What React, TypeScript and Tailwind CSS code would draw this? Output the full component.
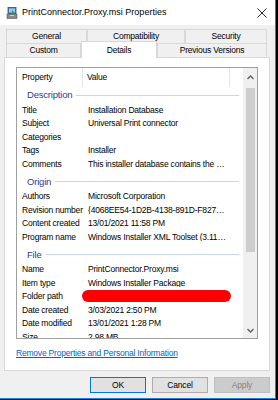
import React from 'react';

type Row = { label: string; value?: string; redacted?: boolean };
type Group = { title: string; rows: Row[] };

const groups: Group[] = [
  {
    title: 'Description',
    rows: [
      { label: 'Title', value: 'Installation Database' },
      { label: 'Subject', value: 'Universal Print connector' },
      { label: 'Categories' },
      { label: 'Tags', value: 'Installer' },
      { label: 'Comments', value: 'This installer database contains the logic and data required to install' },
    ],
  },
  {
    title: 'Origin',
    rows: [
      { label: 'Authors', value: 'Microsoft Corporation' },
      { label: 'Revision number', value: '{4068EE54-1D2B-4138-891D-F827A1B2C3D4}' },
      { label: 'Content created', value: '13/01/2021 11:58 PM' },
      { label: 'Program name', value: 'Windows Installer XML Toolset (3.11.2.4516)' },
    ],
  },
  {
    title: 'File',
    rows: [
      { label: 'Name', value: 'PrintConnector.Proxy.msi' },
      { label: 'Item type', value: 'Windows Installer Package' },
      { label: 'Folder path', redacted: true },
      { label: 'Date created', value: '3/03/2021 2:50 PM' },
      { label: 'Date modified', value: '13/01/2021 1:28 PM' },
      { label: 'Size', value: '2.98 MB' },
    ],
  },
];

function InstallerIcon() {
  return (
    <svg width="12" height="12" viewBox="0 0 12 12">
      <rect x="2" y="0.5" width="8" height="6" fill="#4a7fc1" stroke="#2c4f80" strokeWidth="0.8" />
      <rect x="3" y="1.5" width="6" height="4" fill="#9cc8f0" />
      <rect x="1" y="7" width="10" height="4.5" fill="#8a8a8a" stroke="#555" strokeWidth="0.6" />
      <path d="M6 3 L8.5 6 L6 9 Z" fill="#3a9a3a" />
      <rect x="4" y="8" width="4" height="1" fill="#d0d0d0" />
    </svg>
  );
}

function Tab({ label, w, selected }: { label: string; w: string; selected?: boolean }) {
  if (selected) {
    return (
      <div
        className={`${w} relative z-10 -mt-[2px] -mb-[1px] flex h-[17px] items-center justify-center border border-b-0 border-[#d9d9d9] bg-white`}
      >
        {label}
      </div>
    );
  }
  return (
    <div className={`${w} flex h-[14px] items-center justify-center border border-b-0 border-[#d9d9d9] bg-[#f0f0f0]`}>
      {label}
    </div>
  );
}

function Button({ label, focus, disabled }: { label: string; focus?: boolean; disabled?: boolean }) {
  const cls = disabled
    ? 'border-[#bfbfbf] bg-[#cccccc] text-[#838383]'
    : focus
      ? 'border-[#0078d7] bg-[#e1e1e1] text-black'
      : 'border-[#adadad] bg-[#e1e1e1] text-black';
  return (
    <div className={`flex h-[16px] w-[56px] items-center justify-center border ${cls}`}>{label}</div>
  );
}

export default function App() {
  return (
    <div
      className="h-[400px] w-[278px] overflow-hidden bg-black text-[8.5px] leading-none tracking-[-0.2px] text-black"
      style={{ fontFamily: '"Liberation Sans", Arial, sans-serif' }}
    >
      <div className="flex h-[399px] w-[276px] flex-col border-r border-b border-[#1883d7] bg-[#f0f0f0]">
        {/* title bar */}
        <div className="flex h-[25px] items-center bg-white pl-[6px] pr-[8px]">
          <InstallerIcon />
          <span className="ml-[4px] text-[9px] tracking-normal">PrintConnector.Proxy.msi Properties</span>
          <svg className="ml-auto" width="10" height="10" viewBox="0 0 10 10">
            <path d="M0.5 0.5 L9.5 9.5 M9.5 0.5 L0.5 9.5" stroke="#111" strokeWidth="0.9" />
          </svg>
        </div>

        {/* tabs */}
        <div className="mt-[4px] pl-[6px]">
          <div className="flex">
            <Tab label="General" w="w-[81px]" />
            <Tab label="Compatibility" w="w-[98px]" />
            <Tab label="Security" w="w-[82px]" />
          </div>
          <div className="flex items-end">
            <Tab label="Custom" w="w-[75px]" />
            <Tab label="Details" w="w-[76px]" selected />
            <Tab label="Previous Versions" w="w-[110px]" />
          </div>
        </div>

        {/* panel */}
        <div className="ml-[4px] flex h-[314px] w-[266px] flex-col border border-[#d9d9d9] bg-white pl-[11px] pt-[9px]">
          <div className="flex h-[272px] w-[242px] border border-[#a0a0a0]">
            <div className="flex w-[226px] flex-col overflow-hidden">
              {/* header */}
              <div className="flex h-[19px] shrink-0 items-center">
                <div className="flex h-full w-[66px] items-center border-r border-[#e5e5e5] pl-[5px]">Property</div>
                <div className="flex h-full w-[147px] items-center border-r border-[#e5e5e5] pl-[4px]">Value</div>
              </div>
              {groups.map((g, gi) => (
                <div key={g.title} className={gi === 0 ? '' : 'mt-[3px]'}>
                  <div className="flex h-[16px] items-center pl-[10px] pr-[4px]">
                    <span className="text-[9.5px] text-[#1e3e9e]">{g.title}</span>
                    <div className="ml-[4px] h-px flex-1 bg-[#c9d6f2]" />
                  </div>
                  {g.rows.map((r) => (
                    <div key={r.label} className="flex h-[13.5px] items-center">
                      <div className="w-[66px] shrink-0 pl-[5px] whitespace-nowrap">{r.label}</div>
                      {r.redacted ? (
                        <div className="-ml-[1px] h-[12px] w-[149px] rounded-full bg-[#ff0000]" />
                      ) : (
                        <div className="w-[143px] truncate pl-[5px]">{r.value}</div>
                      )}
                    </div>
                  ))}
                </div>
              ))}
            </div>
            {/* scrollbar */}
            <div className="ml-auto flex w-[14px] flex-col items-center bg-[#f0f0f0]">
              <div className="flex h-[18px] items-center justify-center">
                <svg width="7" height="5" viewBox="0 0 7 5">
                  <path d="M0.5 4 L3.5 1 L6.5 4" fill="none" stroke="#606060" strokeWidth="1.3" />
                </svg>
              </div>
              <div className="mt-[2px] h-[164px] w-[9px] bg-[#cdcdcd]" />
              <div className="mt-auto flex h-[16px] items-center justify-center">
                <svg width="7" height="5" viewBox="0 0 7 5">
                  <path d="M0.5 1 L3.5 4 L6.5 1" fill="none" stroke="#606060" strokeWidth="1.3" />
                </svg>
              </div>
            </div>
          </div>
          <div className="mt-[10px] text-[#0066cc] underline">Remove Properties and Personal Information</div>
        </div>

        {/* buttons */}
        <div className="mt-[6px] flex gap-[6px] pl-[90px]">
          <Button label="OK" focus />
          <Button label="Cancel" />
          <Button label="Apply" disabled />
        </div>
      </div>
    </div>
  );
}
